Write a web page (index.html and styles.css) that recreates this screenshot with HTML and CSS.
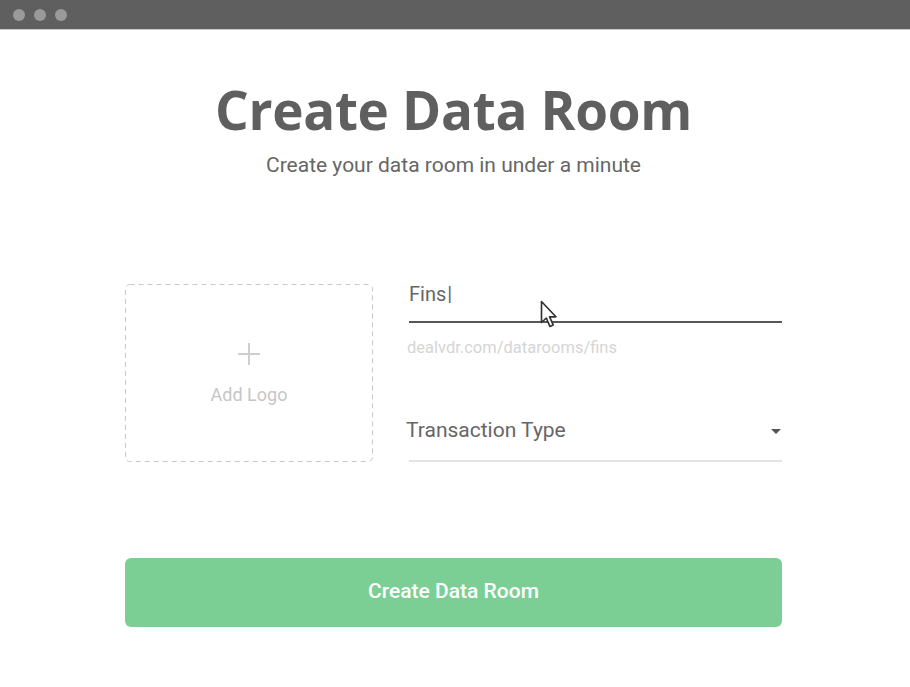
FILE: index.html
```html
<!DOCTYPE html>
<html>
<head>
<meta charset="utf-8">
<link rel="stylesheet" href="styles.css">
</head>
<body>
<div class="window">
  <div class="titlebar">
    <span class="dot"></span><span class="dot"></span><span class="dot"></span>
  </div>
  <main class="content">
    <h1 class="title">Create Data Room</h1>
    <p class="subtitle">Create your data room in under a minute</p>
    <div class="form-row">
      <div class="logo-box">
        <svg class="dash-frame" width="248" height="178" viewBox="0 0 248 178">
          <rect x="0.5" y="0.5" width="247" height="177" rx="4" ry="4" fill="none" stroke="#c8c8c8" stroke-width="1" stroke-dasharray="5 4"/>
        </svg>
        <div class="plus"></div>
        <div class="logo-label">Add Logo</div>
      </div>
      <div class="fields">
        <div class="field name-field">
          <div class="input-text">Fins<span class="caret-bar">|</span></div>
          <div class="underline active"></div>
          <svg class="pointer" width="18" height="30" viewBox="0 0 12 20">
            <path d="M1 1 L1 15 L4.2 12 L6.6 17.6 L8.8 16.6 L6.4 11.2 L10.6 11.2 Z" fill="#fff" stroke="#333" stroke-width="1.1" stroke-linejoin="round"/>
          </svg>
        </div>
        <div class="hint">dealvdr.com/datarooms/fins</div>
        <div class="field select-field">
          <div class="select-text">Transaction Type</div>
          <span class="arrow"></span>
        </div>
        <div class="underline light"></div>
      </div>
    </div>
    <button class="create-btn">Create Data Room</button>
  </main>
</div>
</body>
</html>
```
FILE: styles.css
```css
* { box-sizing: border-box; }
html, body { margin: 0; padding: 0; background: #fff; }
body { font-family: Roboto, "Liberation Sans", sans-serif; }
.window { width: 910px; height: 687px; overflow: hidden; }
.titlebar {
  height: 30px;
  background: #5f5f5f;
  border-bottom: 1px solid #c9c9c9;
  display: flex;
  align-items: center;
  gap: 9px;
  padding-left: 13px;
}
.dot { width: 12px; height: 12px; border-radius: 50%; background: #9a9a9a; }
.content {
  display: flex;
  flex-direction: column;
  align-items: center;
  padding-right: 3px;
}
.title {
  font-family: "Open Sans", sans-serif;
  font-weight: 700;
  font-size: 53px;
  color: #5f5f5f;
  margin: 43px 0 0 0;
  line-height: 74px;
  letter-spacing: -0.3px;
}
.subtitle {
  margin: 5px 0 0 0;
  font-size: 21px;
  color: #666;
  line-height: 26px;
}
.form-row {
  margin-top: 106px;
  width: 657px;
  display: flex;
  gap: 36px;
}
.logo-box {
  position: relative;
  width: 248px;
  height: 178px;
  display: flex;
  flex-direction: column;
  align-items: center;
  padding-top: 59px;
}
.dash-frame { position: absolute; left: 0; top: 0; }
.plus { width: 22px; height: 22px; position: relative; }
.plus::before, .plus::after {
  content: "";
  position: absolute;
  background: #cfcfcf;
}
.plus::before { left: 10px; top: 0; width: 2px; height: 22px; }
.plus::after { top: 10px; left: 0; height: 2px; width: 22px; }
.logo-label {
  margin-top: 20px;
  font-size: 18px;
  line-height: 20px;
  color: #c6c6c6;
}
.fields { flex: 1; display: flex; flex-direction: column; }
.field { position: relative; }
.input-text {
  font-size: 20px;
  color: #666;
  line-height: 22px;
  padding-left: 0;
  margin-top: -1px;
}
.caret-bar { font-weight: 400; color: #666; margin-left: 1px; }
.underline { height: 2px; }
.underline.active { background: #585858; margin-top: 16px; }
.underline.light { height: 2px; background: #e4e4e4; }
.pointer { position: absolute; left: 131px; top: 16px; }
.hint {
  margin-top: 16px;
  font-size: 16.5px;
  color: #d5d5d5;
  margin-left: -2px;
  line-height: 18px;
}
.select-field {
  margin-top: 61px;
  height: 42px;
  display: flex;
  align-items: flex-start;
  justify-content: space-between;
}
.select-text {
  font-size: 21px;
  color: #666;
  margin-left: -3px;
  line-height: 24px;
}
.arrow {
  margin-top: 11px;
  margin-right: 1px;
  width: 0; height: 0;
  border-left: 5px solid transparent;
  border-right: 5px solid transparent;
  border-top: 5px solid #555;
}
.create-btn {
  margin-top: 96px;
  width: 657px;
  height: 69px;
  border: none;
  border-radius: 6px;
  background: #7bcf95;
  color: #fff;
  font-family: Roboto, sans-serif;
  font-weight: 500;
  font-size: 21px;
  padding: 0 0 4px 0;
}
```
